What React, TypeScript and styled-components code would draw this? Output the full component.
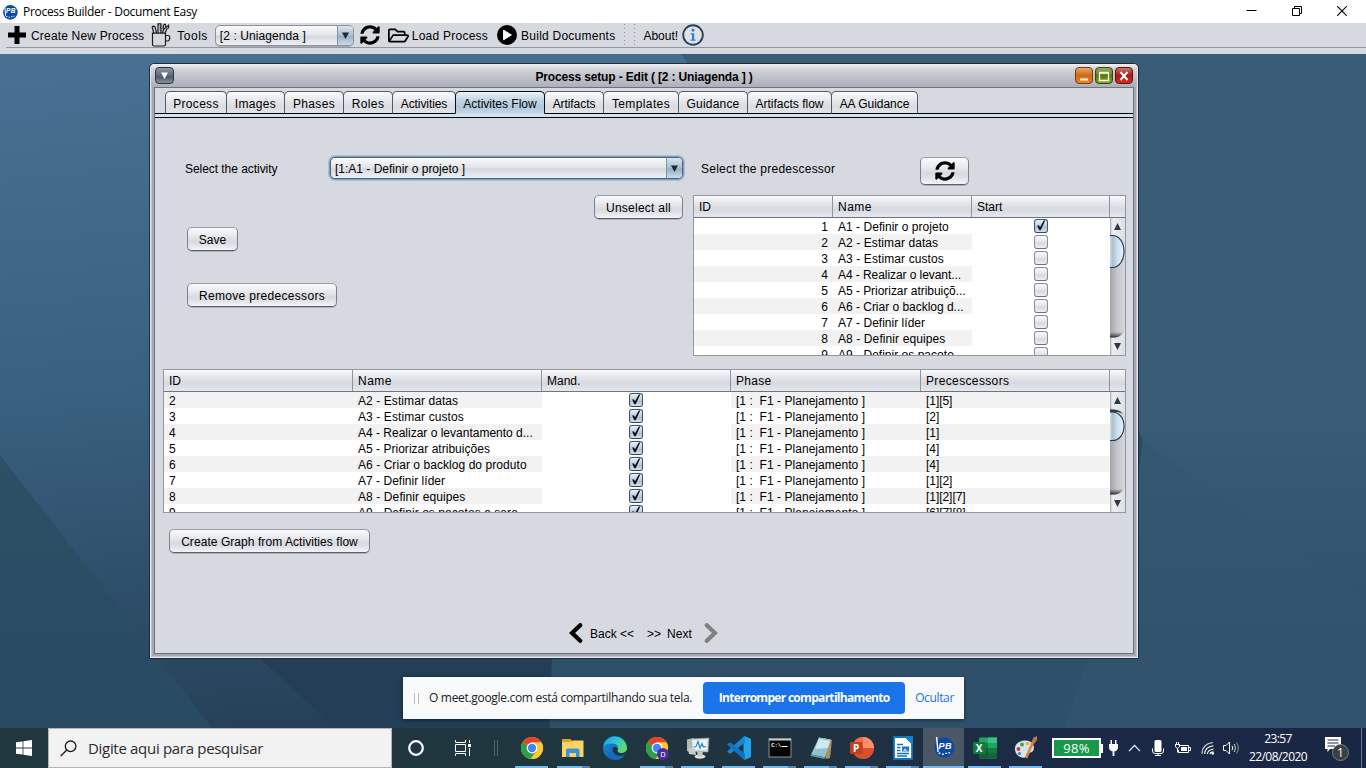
import React from 'react';
import styled, { createGlobalStyle, css } from 'styled-components';
import { FaSyncAlt, FaRegFolderOpen } from 'react-icons/fa';

const swing = '"Liberation Sans", Arial, sans-serif';
const segoe = '"Open Sans", "Noto Sans", sans-serif';
const panel = '#d6d9df';

const GlobalStyle = createGlobalStyle`
  * { box-sizing: border-box; }
  body { margin: 0; overflow: hidden; font: 12px/16px ${swing}; color: #000; }
  svg { display: block; flex: none; }
`;

const Screen = styled.div`
  width: 1366px;
  height: 768px;
  display: grid;
  grid-template-rows: 23px 31px 674px 40px;
  overflow: hidden;
`;

const Label = styled.span<{ $ls?: number; $ml?: number }>`
  white-space: pre;
  letter-spacing: ${p => p.$ls ?? 0}px;
  margin-left: ${p => p.$ml ?? 0}px;
`;

/* Swing text sits one pixel below the middle of its control */
const SwingLabel = styled(Label)`
  padding-top: 2px;
`;

/* ---------- application frame ---------- */

const TitleBar = styled.header`
  display: flex;
  align-items: center;
  justify-content: space-between;
  background: #fff;
  font-family: ${segoe};
  padding: 0 19px 0 2px;
`;

const TitleLeft = styled.div`
  display: flex;
  align-items: center;
  gap: 5px;
`;

const TitleButtons = styled.div`
  display: flex;
  align-items: center;
  gap: 35px;
  padding-bottom: 2px;
`;

const Toolbar = styled.div`
  display: flex;
  align-items: center;
  background: ${panel};
  padding: 0 0 7px 7px;
  background-image: linear-gradient(#9297a1, #9297a1);
  background-size: 1360px 1px;
  background-position: 6px 24px;
  background-repeat: no-repeat;
`;

const ToolItem = styled.div<{ $ml?: number; $gap?: number }>`
  display: flex;
  align-items: center;
  gap: ${p => p.$gap ?? 4}px;
  margin-left: ${p => p.$ml ?? 0}px;
  height: 24px;
`;

const Grip = styled.div<{ $ml: number }>`
  width: 1px;
  height: 23px;
  margin-left: ${p => p.$ml}px;
  background: repeating-linear-gradient(#8f939c 0 1px, transparent 1px 4px);
`;

const Combo = styled.div<{ $w: number; $focus?: boolean }>`
  display: flex;
  align-items: stretch;
  width: ${p => p.$w}px;
  height: ${p => (p.$focus ? 22 : 21)}px;
  border: 1px solid ${p => (p.$focus ? '#5a6270' : '#8b909a')};
  border-radius: 5px;
  background: linear-gradient(#fbfbfc 0%, #e4e6ea 45%, #d5d8de 55%, #eef0f6 100%);
  overflow: hidden;
  ${p =>
    p.$focus
      ? css`
          box-shadow: 0 0 0 1px #73a4d1, 0 0 0 2px rgba(115, 164, 209, 0.45);
        `
      : css`
          box-shadow: 0 1px 0 rgba(120, 126, 138, 0.5);
        `}
`;

const ComboText = styled.div`
  flex: 1;
  display: flex;
  align-items: center;
  padding-left: 4px;
`;

const ComboArrow = styled.div`
  width: 16px;
  display: flex;
  align-items: center;
  justify-content: center;
  border-left: 1px solid #7c93a9;
  background: linear-gradient(#d9e4ee 0%, #a9bfd2 48%, #98b1c7 55%, #c8dcec 100%);
`;

/* ---------- desktop ---------- */

const Desktop = styled.main`
  position: relative;
  overflow: hidden;
  background: #3a5e79;
`;

const Wallpaper = styled.svg`
  position: absolute;
  inset: 0;
`;

const Frame = styled.section`
  position: absolute;
  left: 149px;
  top: 9px;
  width: 990px;
  height: 596px;
  display: flex;
  flex-direction: column;
  border: 1px solid #232c36;
  border-radius: 5px 5px 1px 1px;
  padding: 0 4px 4px;
  background: #a5a9b3;
  box-shadow: inset 0 0 0 1px #e6e8ec, inset 0 0 0 2px #bfc3cb;
`;

const FrameTitle = styled.div`
  height: 23px;
  flex: none;
  display: flex;
  align-items: center;
  justify-content: space-between;
  margin: 0 -3px;
  padding: 0 4px 0 3px;
  border-radius: 4px 4px 0 0;
  background: linear-gradient(#eeeff1 0%, #cfd1d7 25%, #b9bbc4 75%, #adafb8 100%);
  font-weight: bold;
`;

const MenuButton = styled.div`
  width: 19px;
  height: 17px;
  margin-left: 1px;
  display: flex;
  align-items: center;
  justify-content: center;
  border: 1px solid #2d3542;
  border-radius: 4px;
  background: linear-gradient(#8e96a6 0%, #5d6779 50%, #515b6d 60%, #8790a1 100%);
`;

const FrameButtons = styled.div`
  display: flex;
  gap: 2px;
`;

const tones = {
  orange: ['#7a3c05', '#e3a872', '#cf6a10', '#e8841c'],
  green: ['#34480a', '#93ac5a', '#5d7a0c', '#86a51f'],
  red: ['#5f0d0d', '#d0716d', '#a91a16', '#cf2f27'],
};

const FrameButton = styled.div<{ $tone: keyof typeof tones }>`
  width: 18px;
  height: 17px;
  display: flex;
  align-items: center;
  justify-content: center;
  border: 1px solid ${p => tones[p.$tone][0]};
  border-radius: 4px;
  background: linear-gradient(
    ${p => tones[p.$tone][1]} 0%,
    ${p => tones[p.$tone][2]} 50%,
    ${p => tones[p.$tone][3]} 100%
  );
`;

const Content = styled.div`
  flex: 1;
  display: flex;
  flex-direction: column;
  border: 1px solid #6b7280;
  background: ${panel};
`;

const Tabs = styled.div`
  display: flex;
  padding: 3px 0 0 10px;
  background: linear-gradient(#000, #000) 0 25px / 100% 1px no-repeat, ${panel};
`;

const Tab = styled.div<{ $w: number; $active?: boolean }>`
  width: ${p => p.$w + 1}px;
  height: 23px;
  margin-right: -1px;
  display: flex;
  justify-content: center;
  padding-top: 2px;
  border: 1px solid ${p => (p.$active ? '#0a0f18' : '#565b66')};
  border-bottom-color: ${p => (p.$active ? '#c9dcea' : '#000')};
  border-radius: 5px 5px 0 0;
  position: relative;
  z-index: ${p => (p.$active ? 1 : 0)};
  background: ${p =>
    p.$active
      ? 'linear-gradient(#eef3f8 0%, #c5d6e5 35%, #b0c8dc 75%, #c3d8e8 100%)'
      : 'linear-gradient(#fbfbfc 0%, #e9eaed 35%, #d9dce1 70%, #e2e4e9 100%)'};
`;

const TabStrip = styled.div`
  height: 4px;
  flex: none;
  background: #cfe3f1;
  border-bottom: 1px solid #05080d;
`;

const Upper = styled.div`
  display: flex;
  padding-top: 39px;
`;

const LeftColumn = styled.div`
  width: 538px;
  display: flex;
  flex-direction: column;
  align-items: flex-start;
  padding-left: 32px;
`;

const RightColumn = styled.div`
  width: 433px;
  display: flex;
  flex-direction: column;
`;

const ActivityRow = styled.div`
  display: flex;
  align-items: center;
  width: 498px;
  height: 22px;
  margin-left: -2px;
  justify-content: space-between;
`;

const PredecessorRow = styled.div`
  display: flex;
  align-items: flex-start;
  justify-content: space-between;
  height: 38px;
  padding: 0 157px 0 8px;
  line-height: 24px;
`;

const Button = styled.div<{ $w: number; $h?: number; $mt?: number; $ml?: number; $end?: boolean }>`
  width: ${p => p.$w}px;
  height: ${p => p.$h ?? 24}px;
  flex: none;
  margin-top: ${p => p.$mt ?? 0}px;
  margin-left: ${p => p.$ml ?? 0}px;
  align-self: ${p => (p.$end ? 'flex-end' : 'flex-start')};
  margin-right: ${p => (p.$end ? 10 : 0)}px;
  display: flex;
  align-items: center;
  justify-content: center;
  border: 1px solid #7b808b;
  border-top-color: #989ca6;
  border-bottom-color: #5a5f6a;
  border-radius: 5px;
  background: linear-gradient(#fbfbfc 0%, #e8e9ed 35%, #d6d9df 60%, #dfe1e7 75%, #f3f4fa 100%);
  box-shadow: 0 1px 0 rgba(100, 106, 118, 0.35);
`;

/* ---------- tables ---------- */

const TableBox = styled.div<{ $h: number }>`
  height: ${p => p.$h}px;
  flex: none;
  display: flex;
  flex-direction: column;
  border: 1px solid #9297a1;
  background: #fff;
  overflow: hidden;
`;

const HeadRow = styled.div<{ $cols: string }>`
  display: grid;
  grid-template-columns: ${p => p.$cols} 15px;
  height: 22px;
  flex: none;
  line-height: 23px;
  border-bottom: 1px solid #6d7380;
  background: linear-gradient(#fbfbfc 0%, #e3e5e9 35%, #d6d9df 65%, #e6e8f0 100%);
`;

const HeadCell = styled.div`
  height: 21px;
  padding-left: 5px;
  border-right: 1px solid #8f949f;
  &:last-child { border-right: 0; }
`;

const TableBody = styled.div`
  flex: 1;
  min-height: 0;
  display: flex;
`;

const Rows = styled.div`
  flex: 1;
  overflow: hidden;
`;

const Row = styled.div<{ $cols: string }>`
  display: grid;
  grid-template-columns: ${p => p.$cols};
  height: 16px;
`;

const Cell = styled.div<{ $odd: boolean; $right?: boolean; $ls?: number }>`
  padding: 0 5px;
  line-height: 18px;
  height: 16px;
  white-space: pre;
  letter-spacing: ${p => p.$ls ?? 0}px;
  text-align: ${p => (p.$right ? 'right' : 'left')};
  background: ${p => (p.$odd ? '#f2f2f2' : '#fff')};
`;

const CheckCell = styled.div`
  display: flex;
  align-items: center;
  justify-content: center;
  padding-right: 0.6px;
  background: #fff;
`;

const Box = styled.div<{ $on: boolean }>`
  width: 14px;
  height: 14px;
  border: 1px solid ${p => (p.$on ? '#3f5468' : '#8a8f9b')};
  border-bottom-color: ${p => (p.$on ? '#33475a' : '#6c717d')};
  border-radius: 3px;
  background: ${p =>
    p.$on
      ? 'linear-gradient(#eaf1f7 0%, #b9cddd 50%, #a9c1d4 60%, #cfe2f0 100%)'
      : 'linear-gradient(#fafafb 0%, #e2e4e9 50%, #d8dbe1 65%, #eff0f6 100%)'};
`;

const Check = ({ on }: { on: boolean }) => (
  <Box $on={on}>
    {on && (
      <svg width="12" height="12" viewBox="0 0 12 12">
        <path d="M2.1 5.6H4.1L5 7.4L8.8 .6H10.2L5.6 10.2H4.4Z" fill="#000" />
      </svg>
    )}
  </Box>
);

const ScrollBar = ({ id, h, thumbY, thumbH }: { id: string; h: number; thumbY: number; thumbH: number }) => (
  <svg width="15" height={h} viewBox={`0 0 15 ${h}`}>
    <defs>
      <linearGradient id={`${id}track`}>
        <stop offset="0" stopColor="#a3a4a8" />
        <stop offset=".5" stopColor="#c6c7ca" />
        <stop offset="1" stopColor="#d6d8dc" />
      </linearGradient>
      <linearGradient id={`${id}btn`}>
        <stop offset="0" stopColor="#c3c7cf" />
        <stop offset=".2" stopColor="#eceef1" />
        <stop offset="1" stopColor="#dcdfe4" />
      </linearGradient>
      <linearGradient id={`${id}thumb`}>
        <stop offset="0" stopColor="#d9e7f2" />
        <stop offset=".25" stopColor="#a9c0d3" />
        <stop offset=".55" stopColor="#cfdfec" />
        <stop offset="1" stopColor="#e4f3fc" />
      </linearGradient>
      <linearGradient id={`${id}dark`} x1="0" y1="0" x2="0" y2="1">
        <stop offset="0" stopColor="#333" stopOpacity="0" />
        <stop offset="1" stopColor="#1c1c1f" stopOpacity=".9" />
      </linearGradient>
    </defs>
    <rect width="15" height={h} fill={`url(#${id}btn)`} />
    <path d={`M0 17 Q10 17 15 24 V${h - 24} Q12 ${h - 18} 5 ${h - 17.5} H0 Z`} fill={`url(#${id}track)`} />
    <path d={`M0 ${h - 23} H13.5 Q10 ${h - 18} 5 ${h - 17.5} H0 Z`} fill={`url(#${id}dark)`} />
    {thumbY > 18 && <path d="M0 17.4 H4 Q10 18 13 21.5 L8 20 H0 Z" fill="#3a3c42" />}
    <path
      d={`M-1 ${thumbY} H2 C18 ${thumbY} 18 ${thumbY + thumbH} 2 ${thumbY + thumbH} H-1 Z`}
      fill={`url(#${id}thumb)`}
      stroke="#20364a"
      strokeWidth="1.1"
    />
    <path d={`M.5 0 V17 M.5 ${h - 17} V${h}`} stroke="#aeb3bd" />
    <path d="M4 12 L7.5 5 L11 12 Z" fill="#33373e" />
    <path d={`M4 ${h - 12} L7.5 ${h - 5} L11 ${h - 12} Z`} fill="#33373e" />
  </svg>
);

const predCols = '139px 139px 138px';
const predRows: [string, string, number][] = [
  ['1', 'A1 - Definir o projeto', 0.03],
  ['2', 'A2 - Estimar datas', 0.08],
  ['3', 'A3 - Estimar custos', 0.1],
  ['4', 'A4 - Realizar o levant...', -0.07],
  ['5', 'A5 - Priorizar atribuiçõ...', -0.04],
  ['6', 'A6 - Criar o backlog d...', -0.02],
  ['7', 'A7 - Definir líder', 0.02],
  ['8', 'A8 - Definir equipes', 0.1],
  ['9', 'A9 - Definir os pacote...', 0.02],
];

const flowCols = '189px 189px 189px 190px 189px';
const flowRows: [string, string, number, string][] = [
  ['2', 'A2 - Estimar datas', 0.08, '[1][5]'],
  ['3', 'A3 - Estimar custos', 0.1, '[2]'],
  ['4', 'A4 - Realizar o levantamento d...', 0, '[1]'],
  ['5', 'A5 - Priorizar atribuições', 0.02, '[4]'],
  ['6', 'A6 - Criar o backlog do produto', 0.06, '[4]'],
  ['7', 'A7 - Definir líder', 0.02, '[1][2]'],
  ['8', 'A8 - Definir equipes', 0.1, '[1][2][7]'],
  ['9', 'A9 - Definir os pacotes a sere...', 0.06, '[6][7][8]'],
];

const FlowTable = styled.div`
  margin: 13px 7px 0 8px;
`;

const Pager = styled.nav`
  display: flex;
  align-items: center;
  height: 20px;
  margin: 70px 0 0 414px;
`;

/* ---------- screen sharing notice ---------- */

const ShareBar = styled.aside`
  position: absolute;
  left: 403px;
  top: 623px;
  width: 561px;
  height: 42px;
  display: flex;
  align-items: center;
  background: #f8f9fb;
  box-shadow: 0 1px 4px rgba(0, 0, 0, 0.5);
  font-family: ${segoe};
  color: #202124;
  padding-left: 11px;
`;

const ShareGrip = styled.div`
  width: 5px;
  height: 11px;
  border: solid #b9bcc1;
  border-width: 0 1px;
  margin-right: 10px;
`;

const StopButton = styled.div`
  width: 202px;
  height: 32px;
  margin: 0 10px 0 11px;
  display: flex;
  align-items: center;
  justify-content: center;
  border-radius: 4px;
  background: #1a73e8;
  color: #fff;
  font-weight: 700;
`;

const HideLink = styled.div`
  color: #1a73e8;
`;

/* ---------- taskbar ---------- */

const TaskBar = styled.footer`
  display: flex;
  background: linear-gradient(90deg, #22383f 0%, #20363f 45%, #1e3042 65%, #1b2946 80%, #1a2744 100%);
  font-family: ${segoe};
  color: #fff;
`;

const StartButton = styled.div`
  width: 48px;
  display: flex;
  align-items: center;
  justify-content: center;
`;

const Search = styled.div`
  width: 344px;
  display: flex;
  align-items: center;
  gap: 11px;
  padding-left: 11px;
  border: 1px solid #b3b3b3;
  background: #f2f2f2;
  color: #2c2c2c;
  font-size: 15px;
`;

const SystemSlot = styled.div`
  width: 47.5px;
  display: flex;
  align-items: center;
  justify-content: center;
`;

const SlotGrip = styled.div`
  width: 4px;
  height: 16px;
  margin: 12px 13px 0 7px;
  border: solid #4f626a;
  border-width: 0 1px;
`;

const TaskItem = styled.div<{ $w?: number; $active?: boolean; $line?: 'none' | 'one' | 'many' }>`
  width: ${p => p.$w ?? 41}px;
  display: flex;
  flex-direction: column;
  align-items: center;
  justify-content: space-between;
  padding-top: 8px;
  background: ${p => (p.$active ? '#4a5866' : 'transparent')};
  &::after {
    content: '';
    width: ${p => (p.$active ? '100%' : '33px')};
    height: 2px;
    background: ${p =>
      p.$line === 'none'
        ? 'transparent'
        : p.$line === 'many'
        ? 'linear-gradient(90deg, #76b9ed 0 25px, #5686ac 25px)'
        : '#76b9ed'};
  }
`;

const Tray = styled.div`
  flex: 1;
  display: flex;
  align-items: center;
  padding-left: 6px;
`;

const Battery = styled.div`
  width: 49px;
  height: 20px;
  display: flex;
  align-items: center;
  justify-content: center;
  border: 2px solid #fff;
  background: #16994a;
  font-size: 13px;
`;

const BatteryNub = styled.div`
  width: 2px;
  height: 9px;
  background: #fff;
`;

const TrayIcon = styled.div<{ $ml: number }>`
  margin-left: ${p => p.$ml}px;
`;

const Clock = styled.div`
  width: 60px;
  margin-left: 8px;
  display: flex;
  flex-direction: column;
  align-items: center;
  line-height: 18px;
  padding-bottom: 1px;
`;

const Notice = styled.div`
  margin-left: 16px;
  width: 26px;
`;

const PeekEdge = styled.div`
  width: 1px;
  height: 40px;
  margin-left: auto;
  margin-right: 4px;
  background: #6b7386;
`;

/* ---------- drawings ---------- */

const PbLogo = ({ size }: { size: number }) => (
  <svg width={size} height={size} viewBox="0 0 22 22">
    <circle cx="11.5" cy="11.5" r="10" fill="#0a4aa6" />
    <path d="M3.6 1 L5 16" stroke="#fff" strokeWidth="1.4" />
    <text x="5.6" y="13" fontFamily="Liberation Sans" fontStyle="italic" fontWeight="bold" fontSize="9" fill="#fff" textLength="13">PB</text>
    <path d="M5.5 17.2h2M9 18.2h2M12.3 17.4h2M15.5 16.8h1.6" stroke="#dfe9f8" strokeWidth="1.4" />
  </svg>
);

const DownArrow = ({ color = '#23272e', w = 7 }: { color?: string; w?: number }) => (
  <svg width={w} height="7" viewBox="0 0 7 7" preserveAspectRatio="none">
    <path d="M0 .5H7L3.5 7Z" fill={color} />
  </svg>
);

const CupIcon = () => (
  <svg width="20" height="24" viewBox="0 0 20 24" fill="none" stroke="#1b1b1b" strokeWidth="1.2">
    <path d="M1.5 10.2H14.5V21.5Q14.5 23 13 23H3Q1.5 23 1.5 21.5Z" />
    <path d="M14.5 12.5H17Q18.8 12.5 18.8 14.5Q18.8 17.6 16.5 18H14.5" />
    <path d="M2.8 10 L1.2 4.2 L2.4 3 L4 4 L5.6 10 M7 10V.8H10V10 M8.6 3H10M8.6 5H10M8.6 7H10" />
    <path d="M11.5 10 L12.8 6 M14 10 L16.4 5 M13 1.2 Q15 1 14.8 3.4 T12.4 6.2 Q11.4 5 13 1.2 M15.4 4.6L17.6 2.2V5.6" />
  </svg>
);

const InfoIcon = () => (
  <svg width="22" height="22" viewBox="0 0 22 22">
    <circle cx="11" cy="11" r="9.8" fill="#dde3ea" stroke="#2d4254" strokeWidth="1.9" />
    <circle cx="11" cy="6.1" r="1.6" fill="#2f7fc6" />
    <path d="M8.7 9.2H12.2V15.6H13.6V16.8H8.5V15.6H10V10.4H8.7Z" fill="#2f7fc6" />
  </svg>
);

const ChromeIcon = ({ badge }: { badge?: boolean }) => (
  <svg width="24" height="24" viewBox="0 0 24 24">
    <circle cx="12" cy="12" r="11" fill="#fbc91f" />
    <path d="M12 12 L2.47 6.5 A11 11 0 0 0 10.6 22.9 L16.5 15 Z" fill="#2ba04b" />
    <path d="M12 12 L2.5 6.5 A11 11 0 0 1 21.5 6.5 H12 Z" fill="#e2432f" />
    <path d="M12 6.6 H21.6 A11 11 0 0 1 10.6 22.9 L16.7 14.8 Z" fill="#fcc934" />
    <circle cx="12" cy="12" r="5.4" fill="#fff" />
    <circle cx="12" cy="12" r="4.2" fill="#4486f4" />
    {badge && (
      <>
        <circle cx="18" cy="18" r="6" fill="#4b2aa0" />
        <text x="18" y="20.7" textAnchor="middle" fontFamily="Open Sans" fontSize="7.5" fill="#fff">D</text>
      </>
    )}
  </svg>
);

const FolderIcon = () => (
  <svg width="24" height="24" viewBox="0 0 24 24">
    <path d="M1 3H9.5L11.5 5V8H1Z" fill="#e0a21b" />
    <path d="M1 6H10L12 4.5H22.5V21H1Z" fill="#fcd462" />
    <path d="M5 21V14.5Q5 12.5 7 12.5H16.5Q18.5 12.5 18.5 14.5V21H15V17H8.5V21Z" fill="#3b92dc" />
  </svg>
);

const EdgeIcon = () => (
  <svg width="24" height="24" viewBox="0 0 24 24">
    <defs>
      <linearGradient id="edgeTop" x1="0" y1="0" x2="1" y2=".6">
        <stop offset="0" stopColor="#1d9fe0" />
        <stop offset=".5" stopColor="#2fc5d4" />
        <stop offset="1" stopColor="#5fdc5c" />
      </linearGradient>
      <linearGradient id="edgeLow" x1="0" y1="0" x2="1" y2="1">
        <stop offset="0" stopColor="#1b8fdc" />
        <stop offset="1" stopColor="#0f4f9c" />
      </linearGradient>
    </defs>
    <circle cx="12" cy="12" r="12" fill="url(#edgeLow)" />
    <path d="M0.3 10 A12 12 0 0 1 24 12 C24 16 20 17.5 17 17 C14 16.4 14 15 15 13.6 C16 11 14 8 10 7.5 C5 7 1.5 9 .3 10Z" fill="url(#edgeTop)" />
    <path d="M9.5 10.5 C7 13 8 19 13.5 20.5 C17 21.3 20.5 20 22.3 18 A12 12 0 0 1 12 24 C6 22 5.5 14 9.5 10.5Z" fill="#156bc0" />
    <path d="M15 13.6 C14 15 14 16.4 17 17 C20 17.5 23 16.3 23.7 14 C23.5 16.5 22.8 17.6 22.2 18.3 C19 21 9.5 20 9.6 13 C9.6 10.5 12.5 9 15 13.6Z" fill="#1d3440" />
  </svg>
);

const MonitorIcon = () => (
  <svg width="24" height="24" viewBox="0 0 24 24">
    <path d="M1 3.5L8 2V17L1 15Z" fill="#b5b9b8" />
    <path d="M5 3L23 2L22 16L6 15.5Z" fill="#d8dbda" stroke="#9a9f9f" strokeWidth=".6" />
    <path d="M7 4.5L21 3.8L20.3 14L7.6 13.6Z" fill="#eaf5fb" />
    <path d="M7.8 11L10 10.5L12 5.5L14 12L16 7.5L17.5 11L20 10.5" fill="none" stroke="#2b86c5" strokeWidth="1.2" />
    <path d="M2 13Q6 10.5 9 13L10 19L3 18Z" fill="#c9cccb" />
    <ellipse cx="14" cy="20.5" rx="5.5" ry="2.2" fill="#dfe1e0" />
    <path d="M11 15.6H17L16 20.5H12Z" fill="#c3c6c5" />
  </svg>
);

const CodeIcon = () => (
  <svg width="24" height="24" viewBox="0 0 24 24">
    <path d="M17.5 0L24 3V21L17.5 24L16.5 22V2Z" fill="#23a5ee" />
    <path d="M17.8 0V6.7L3.3 17.8L.4 16.2V15.2L17 .2Z" fill="#1787d1" />
    <path d="M17.8 24V17.3L3.3 6.2L.4 7.8V8.8L17 23.8Z" fill="#0f74bd" />
  </svg>
);

const TerminalIcon = () => (
  <svg width="24" height="24" viewBox="0 0 24 24">
    <rect x="1" y="3" width="22" height="18" fill="#050505" stroke="#8d9294" strokeWidth="1" />
    <rect x="1" y="2.5" width="22" height="2" fill="#c8ccce" />
    <text x="3.2" y="11" fontFamily="Liberation Mono" fontWeight="bold" fontSize="5.5" fill="#fff">C:\</text>
    <path d="M13.5 10.5H19.5" stroke="#fff" strokeWidth="1" />
  </svg>
);

const NotepadIcon = () => (
  <svg width="24" height="24" viewBox="0 0 24 24">
    <path d="M12 2L23 4L21 22L17 23Z" fill="#a98f62" />
    <path d="M10 1.5L21.5 3.5L16 21.5L2 18.5Z" fill="#8fc3cb" />
    <path d="M10 1.5L21.5 3.5L19 12L6 13Z" fill="#cfe8eb" />
    <path d="M2 18.5L16 21.5L15.5 23L1.5 20Z" fill="#5d9aa6" />
    <path d="M10.5 2.3L21 4.1" stroke="#4b6e75" strokeDasharray="1 1" />
  </svg>
);

const PowerPointIcon = () => (
  <svg width="24" height="24" viewBox="0 0 24 24">
    <circle cx="13" cy="12" r="11" fill="#d35230" />
    <path d="M13 1A11 11 0 0 1 24 12H13Z" fill="#ff8f6b" />
    <path d="M13 12H24A11 11 0 0 1 13 23Z" fill="#d8502f" />
    <path d="M13 1A11 11 0 0 0 2.5 9H13Z" fill="#ed6c47" />
    <rect x="0" y="6" width="12.5" height="12" rx="1" fill="#c43e1c" />
    <text x="6.2" y="15.6" textAnchor="middle" fontFamily="Open Sans" fontWeight="bold" fontSize="10" fill="#fff">P</text>
  </svg>
);

const WriterIcon = () => (
  <svg width="24" height="24" viewBox="0 0 24 24">
    <path d="M3 1H15L21 7V23H3Z" fill="#fff" stroke="#1074b8" strokeWidth="1.8" />
    <path d="M14 0H22V8Z" fill="#1284c9" />
    <path d="M6 8.5H12M6 11.5H9.5M6 14.5H9.5M6 17.5H18M6 20H16" stroke="#1074b8" strokeWidth="1.3" />
    <rect x="11" y="10.5" width="7" height="5" fill="#1a7cc0" />
    <path d="M12 14.5L14 12.5L16.5 14.8Z" fill="#d5ebf8" />
  </svg>
);

const ExcelIcon = () => (
  <svg width="24" height="24" viewBox="0 0 24 24">
    <rect x="6" y="1.5" width="18" height="21" rx="1" fill="#21a366" />
    <rect x="15" y="1.5" width="9" height="5.5" fill="#33c481" />
    <rect x="6" y="7" width="9" height="5" fill="#107c41" />
    <rect x="6" y="12" width="9" height="10.5" fill="#185c37" />
    <rect x="15" y="12" width="9" height="5" fill="#107c41" />
    <rect x="15" y="17" width="9" height="5.5" fill="#17633a" />
    <rect x="0" y="6" width="12.5" height="12" rx="1" fill="#107c41" />
    <text x="6.2" y="15.6" textAnchor="middle" fontFamily="Open Sans" fontWeight="bold" fontSize="10" fill="#fff">X</text>
  </svg>
);

const PaintIcon = () => (
  <svg width="26" height="24" viewBox="0 0 26 24">
    <path d="M2 14C1 8 7 4 13 4.5C19 5 22 9 20.5 14C19.5 17 16 16 15 18C14 21 11 23 7.5 21C4 19.5 2.5 17 2 14Z" fill="#d5e5ef" />
    <circle cx="5.5" cy="13" r="1.9" fill="#d93a2b" />
    <circle cx="9" cy="8.5" r="1.9" fill="#3fa648" />
    <circle cx="14.5" cy="7.5" r="1.8" fill="#f0b429" />
    <circle cx="6.5" cy="17.5" r="1.6" fill="#3b7fd0" />
    <path d="M13 22L20 6" stroke="#d98a36" strokeWidth="2.6" />
    <path d="M18.5 6L20.5 1.5L24 0L24 4L21.5 7.5Z" fill="#b8754a" />
  </svg>
);

const tabs: [string, number, number, boolean?][] = [
  ['Process', 61, 0.3],
  ['Images', 58, 0.35],
  ['Phases', 59, 0.35],
  ['Roles', 49, 0.4],
  ['Activities', 63, -0.08],
  ['Activites Flow', 89, 0, true],
  ['Artifacts', 59, -0.08],
  ['Templates', 75, 0.38],
  ['Guidance', 69, 0.2],
  ['Artifacts flow', 84, 0],
  ['AA Guidance', 86, -0.03],
];

export default function App() {
  return (
    <Screen>
      <GlobalStyle />
      <TitleBar>
        <TitleLeft>
          <PbLogo size={16} />
          <Label $ls={-0.3}>Process Builder - Document Easy</Label>
        </TitleLeft>
        <TitleButtons>
          <svg width="11" height="11" viewBox="0 0 11 11"><path d="M.5 5.5H10.5" stroke="#000" /></svg>
          <svg width="10" height="10" viewBox="0 0 10 10" fill="none" stroke="#000">
            <path d="M.5 2.5H7.5V9.5H.5ZM2.5 2.5V.5H9.5V7.5H7.5" />
          </svg>
          <svg width="10" height="10" viewBox="0 0 10 10"><path d="M.2 .2L9.8 9.8M9.8 .2L.2 9.8" stroke="#000" strokeWidth="1.1" /></svg>
        </TitleButtons>
      </TitleBar>

      <Toolbar>
        <ToolItem>
          <svg width="20" height="20" viewBox="0 0 20 20"><path d="M10 1V19M1 10H19" stroke="#000" strokeWidth="5" /></svg>
          <SwingLabel $ls={0.18}>Create New Process</SwingLabel>
        </ToolItem>
        <ToolItem $ml={7} $gap={6}>
          <CupIcon />
          <SwingLabel $ls={0.5}>Tools</SwingLabel>
        </ToolItem>
        <ToolItem $ml={7}>
          <Combo $w={139}>
            <ComboText><SwingLabel $ls={0.09}>[2 : Uniagenda ]</SwingLabel></ComboText>
            <ComboArrow><DownArrow /></ComboArrow>
          </Combo>
        </ToolItem>
        <ToolItem $ml={6}>
          <FaSyncAlt size={20} />
        </ToolItem>
        <ToolItem $ml={8} $gap={3}>
          <FaRegFolderOpen size={21} />
          <SwingLabel $ls={0.24}>Load Process</SwingLabel>
        </ToolItem>
        <ToolItem $ml={9}>
          <svg width="20" height="20" viewBox="0 0 20 20">
            <circle cx="10" cy="10" r="10" />
            <path d="M6.6 5.2L14.4 10L6.6 14.8Z" fill="#fff" stroke="#fff" strokeLinejoin="round" />
          </svg>
          <SwingLabel $ls={0.24}>Build Documents</SwingLabel>
        </ToolItem>
        <Grip $ml={9} />
        <Grip $ml={9} />
        <ToolItem $ml={8} $gap={4}>
          <SwingLabel>About!</SwingLabel>
          <InfoIcon />
        </ToolItem>
      </Toolbar>

      <Desktop>
        <Wallpaper width="1366" height="674" viewBox="0 54 1366 674" preserveAspectRatio="none">
          <defs>
            <linearGradient id="sky" x1="0" y1="0" x2=".2" y2="1">
              <stop offset="0" stopColor="#487193" />
              <stop offset=".5" stopColor="#39607f" />
              <stop offset="1" stopColor="#254159" />
            </linearGradient>
            <linearGradient id="right" x1="0" y1="0" x2="0" y2="1">
              <stop offset="0" stopColor="#395c77" />
              <stop offset=".55" stopColor="#385b76" />
              <stop offset="1" stopColor="#2c4c66" />
            </linearGradient>
            <linearGradient id="left" x1="0" y1="0" x2="0" y2="1">
              <stop offset="0" stopColor="#2e5067" />
              <stop offset="1" stopColor="#284a62" />
            </linearGradient>
          </defs>
          <rect y="54" width="1366" height="674" fill="url(#sky)" />
          <path d="M681 54H1366V728H1160Z" fill="url(#right)" />
          <path d="M0 455L212 728H0Z" fill="url(#left)" />
          <path d="M260 658H552V728H335Z" fill="#233e56" />
          <path d="M552 650H1366V728H550Z" fill="#2e506a" />
          <path d="M1142 440L1366 600V728H1064L1090 650Z" fill="#33566f" opacity=".5" />
          <path d="M1143 440L1139 468V432Z" fill="#2c4c66" />
        </Wallpaper>

        <Frame>
          <FrameTitle>
            <MenuButton><DownArrow color="#fff" /></MenuButton>
            <SwingLabel $ls={-0.15} $ml={39}>Process setup - Edit ( [2 : Uniagenda ] )</SwingLabel>
            <FrameButtons>
              <FrameButton $tone="orange">
                <svg width="12" height="12" viewBox="0 0 12 12"><path d="M2 9.5H10" stroke="#fff" strokeWidth="2" /></svg>
              </FrameButton>
              <FrameButton $tone="green">
                <svg width="12" height="12" viewBox="0 0 12 12"><path d="M1.5 2.5H10.5V10.5H1.5ZM1.5 3H10.5" fill="none" stroke="#fff" strokeWidth="1.3" /></svg>
              </FrameButton>
              <FrameButton $tone="red">
                <svg width="12" height="12" viewBox="0 0 12 12"><path d="M2.5 2L9.5 10M9.5 2L2.5 10" stroke="#fff" strokeWidth="2" /></svg>
              </FrameButton>
            </FrameButtons>
          </FrameTitle>

          <Content>
            <Tabs>
              {tabs.map(([name, w, ls, active]) => (
                <Tab key={name} $w={w} $active={active}><SwingLabel $ls={ls}>{name}</SwingLabel></Tab>
              ))}
            </Tabs>
            <TabStrip />

            <Upper>
              <LeftColumn>
                <ActivityRow>
                  <SwingLabel $ls={-0.05}>Select the activity</SwingLabel>
                  <Combo $w={353} $focus>
                    <ComboText><SwingLabel>[1:A1 - Definir o projeto ]</SwingLabel></ComboText>
                    <ComboArrow><DownArrow /></ComboArrow>
                  </Combo>
                </ActivityRow>
                <Button $w={89} $mt={16} $end><SwingLabel $ls={0.25}>Unselect all</SwingLabel></Button>
                <Button $w={51} $mt={8}><SwingLabel>Save</SwingLabel></Button>
                <Button $w={150} $mt={32}><SwingLabel $ls={0.32}>Remove predecessors</SwingLabel></Button>
              </LeftColumn>
              <RightColumn>
                <PredecessorRow>
                  <Label $ls={0.24}>Select the predescessor</Label>
                  <Button $w={49} $h={28}><FaSyncAlt size={20} /></Button>
                </PredecessorRow>
                <TableBox $h={161}>
                  <HeadRow $cols={predCols}>
                    <HeadCell>ID</HeadCell>
                    <HeadCell><Label $ls={0.5}>Name</Label></HeadCell>
                    <HeadCell>Start</HeadCell>
                    <HeadCell />
                  </HeadRow>
                  <TableBody>
                    <Rows>
                      {predRows.map(([id, name, ls], i) => (
                        <Row key={id} $cols={predCols}>
                          <Cell $odd={i % 2 === 1} $right>{id}</Cell>
                          <Cell $odd={i % 2 === 1} $ls={ls}>{name}</Cell>
                          <CheckCell><Check on={i === 0} /></CheckCell>
                        </Row>
                      ))}
                    </Rows>
                    <ScrollBar id="pred" h={137} thumbY={17.5} thumbH={32} />
                  </TableBody>
                </TableBox>
              </RightColumn>
            </Upper>

            <FlowTable>
              <TableBox $h={144}>
                <HeadRow $cols={flowCols}>
                  <HeadCell>ID</HeadCell>
                  <HeadCell><Label $ls={0.5}>Name</Label></HeadCell>
                  <HeadCell>Mand.</HeadCell>
                  <HeadCell><Label $ls={0.3}>Phase</Label></HeadCell>
                  <HeadCell><Label $ls={0.36}>Precescessors</Label></HeadCell>
                  <HeadCell />
                </HeadRow>
                <TableBody>
                  <Rows>
                    {flowRows.map(([id, name, ls, pred], i) => (
                      <Row key={id} $cols={flowCols}>
                        <Cell $odd={i % 2 === 0}>{id}</Cell>
                        <Cell $odd={i % 2 === 0} $ls={ls}>{name}</Cell>
                        <CheckCell><Check on /></CheckCell>
                        <Cell $odd={i % 2 === 0} $ls={0.04}>{'[1 :  F1 - Planejamento ]'}</Cell>
                        <Cell $odd={i % 2 === 0} $ls={-0.05}>{pred}</Cell>
                      </Row>
                    ))}
                  </Rows>
                  <ScrollBar id="flow" h={120} thumbY={20} thumbH={28.5} />
                </TableBody>
              </TableBox>
            </FlowTable>

            <Button $w={201} $mt={16} $ml={14}><SwingLabel $ls={0.06}>Create Graph from Activities flow</SwingLabel></Button>

            <Pager>
              <svg width="14" height="20" viewBox="0 0 14 20"><path d="M11.2 2.2L3 10L11.2 17.8" fill="none" stroke="#000" strokeWidth="4.2" strokeLinecap="round" /></svg>
              <SwingLabel $ml={7}>{'Back <<'}</SwingLabel>
              <SwingLabel $ml={13}>{'>>'}</SwingLabel>
              <SwingLabel $ml={6}>Next</SwingLabel>
              <Label $ml={12}>
                <svg width="14" height="20" viewBox="0 0 14 20"><path d="M2.8 2.2L11 10L2.8 17.8" fill="none" stroke="#808080" strokeWidth="4.2" strokeLinecap="round" /></svg>
              </Label>
            </Pager>
          </Content>
        </Frame>

        <ShareBar>
          <ShareGrip />
          <Label $ls={-0.31}>O meet.google.com está compartilhando sua tela.</Label>
          <StopButton><Label $ls={-0.7}>Interromper compartilhamento</Label></StopButton>
          <HideLink><Label $ls={-0.35}>Ocultar</Label></HideLink>
        </ShareBar>
      </Desktop>

      <TaskBar>
        <StartButton>
          <svg width="16" height="16" viewBox="0 0 16 16">
            <path d="M0 2.3L6.6 1.4V7.6H0ZM7.4 1.3L16 0V7.6H7.4ZM0 8.4H6.6V14.6L0 13.7ZM7.4 8.4H16V16L7.4 14.7Z" fill="#fff" />
          </svg>
        </StartButton>
        <Search>
          <svg width="17" height="17" viewBox="0 0 17 17" fill="none" stroke="#1c1c1c" strokeWidth="1.3">
            <circle cx="10.6" cy="6.3" r="5.3" />
            <path d="M6.8 10L.8 16" />
          </svg>
          <Label $ls={-0.31}>Digite aqui para pesquisar</Label>
        </Search>
        <SystemSlot>
          <svg width="16" height="16" viewBox="0 0 16 16"><circle cx="8" cy="8" r="6.8" fill="none" stroke="#fff" strokeWidth="2.2" /></svg>
        </SystemSlot>
        <SystemSlot>
          <svg width="16" height="16" viewBox="0 0 16 16" fill="none" stroke="#fff">
            <path d="M.5 0V2.5H10.5V0M.5 16V13.5H10.5V16M.5 4.5H10.5V11.5H.5ZM14.5 0V3M14.5 8V16" />
            <path d="M13 4H16V7H13Z" fill="#fff" stroke="none" />
          </svg>
        </SystemSlot>
        <SlotGrip />
        <TaskItem $line="one"><ChromeIcon /></TaskItem>
        <TaskItem $w={42} $line="many"><FolderIcon /></TaskItem>
        <TaskItem $w={42} $line="none"><EdgeIcon /></TaskItem>
        <TaskItem $line="many"><ChromeIcon badge /></TaskItem>
        <TaskItem><MonitorIcon /></TaskItem>
        <TaskItem><CodeIcon /></TaskItem>
        <TaskItem $line="many"><TerminalIcon /></TaskItem>
        <TaskItem $line="many"><NotepadIcon /></TaskItem>
        <TaskItem $line="many"><PowerPointIcon /></TaskItem>
        <TaskItem $line="many"><WriterIcon /></TaskItem>
        <TaskItem $active><PbLogo size={22} /></TaskItem>
        <TaskItem><ExcelIcon /></TaskItem>
        <TaskItem><PaintIcon /></TaskItem>
        <Tray>
          <Battery><Label $ls={0.3}>98%</Label></Battery>
          <BatteryNub />
          <TrayIcon $ml={6}>
            <svg width="9" height="16" viewBox="0 0 9 16"><path d="M1.5 0H3V4H6V0H7.5V4H9V7Q9 11 5.4 11.3V16H3.6V11.3Q0 11 0 7V4H1.5Z" fill="#fff" /></svg>
          </TrayIcon>
          <TrayIcon $ml={10}>
            <svg width="13" height="8" viewBox="0 0 13 8"><path d="M1 7.2L6.5 1.4L12 7.2" fill="none" stroke="#fff" strokeWidth="1.2" /></svg>
          </TrayIcon>
          <TrayIcon $ml={11}>
            <svg width="12" height="16" viewBox="0 0 12 16">
              <rect x="2.5" y="0" width="7" height="12" rx="1.5" fill="#fff" />
              <path d="M.5 8.5V11Q.5 13.5 3 13.5H9Q11.5 13.5 11.5 11V8.5M6 13.5V15.5M3 15.5H9" fill="none" stroke="#fff" />
            </svg>
          </TrayIcon>
          <TrayIcon $ml={10}>
            <svg width="17" height="13" viewBox="0 0 17 13" fill="none" stroke="#fff">
              <path d="M5.5 3.5H14.5V10.5H4.5V8M15 5.5H16.5V8.5H15M1 2.5H6M1.5 2.5V5L3.5 6.5L5.5 5V2.5M2.5 2.5V0M4.5 2.5V0M3.5 6.5V10.5" />
              <path d="M7 5H13V9H7Z" fill="#fff" stroke="none" />
            </svg>
          </TrayIcon>
          <TrayIcon $ml={10}>
            <svg width="14" height="14" viewBox="0 0 14 14" fill="none" stroke="#fff" strokeWidth="1.1">
              <path d="M1 13Q1 3 12 1.5" opacity=".75" />
              <path d="M3.6 13Q4 6 12.4 4.8M6.4 13Q6.8 8.8 12.6 8M9 13Q9.4 11 12.6 10.8" />
              <circle cx="11.8" cy="12.4" r="1.3" fill="#fff" stroke="none" />
            </svg>
          </TrayIcon>
          <TrayIcon $ml={8}>
            <svg width="17" height="14" viewBox="0 0 17 14" fill="none" stroke="#fff">
              <path d="M.5 4.5H3L6.5 1V13L3 9.5H.5Z" />
              <path d="M9 4.8Q10.4 7 9 9.2" />
              <path d="M11.3 3Q13.6 7 11.3 11" opacity=".8" />
              <path d="M13.6 1.4Q17 7 13.6 12.6" opacity=".5" />
            </svg>
          </TrayIcon>
          <Clock>
            <Label $ls={-0.6}>23:57</Label>
            <Label $ls={-0.55}>22/08/2020</Label>
          </Clock>
          <Notice>
            <svg width="26" height="26" viewBox="0 0 26 26">
              <path d="M1 2H17V14H6L3.5 17V14H1Z" fill="#fff" />
              <path d="M3.5 5H14.5M3.5 8H14.5M3.5 11H11" stroke="#1b2946" />
              <circle cx="16.5" cy="17.5" r="8" fill="#3b3f46" stroke="#8a8f98" strokeWidth=".8" />
              <text x="16.5" y="22" textAnchor="middle" fontFamily="Open Sans" fontSize="12" fill="#fff">1</text>
            </svg>
          </Notice>
          <PeekEdge />
        </Tray>
      </TaskBar>
    </Screen>
  );
}
